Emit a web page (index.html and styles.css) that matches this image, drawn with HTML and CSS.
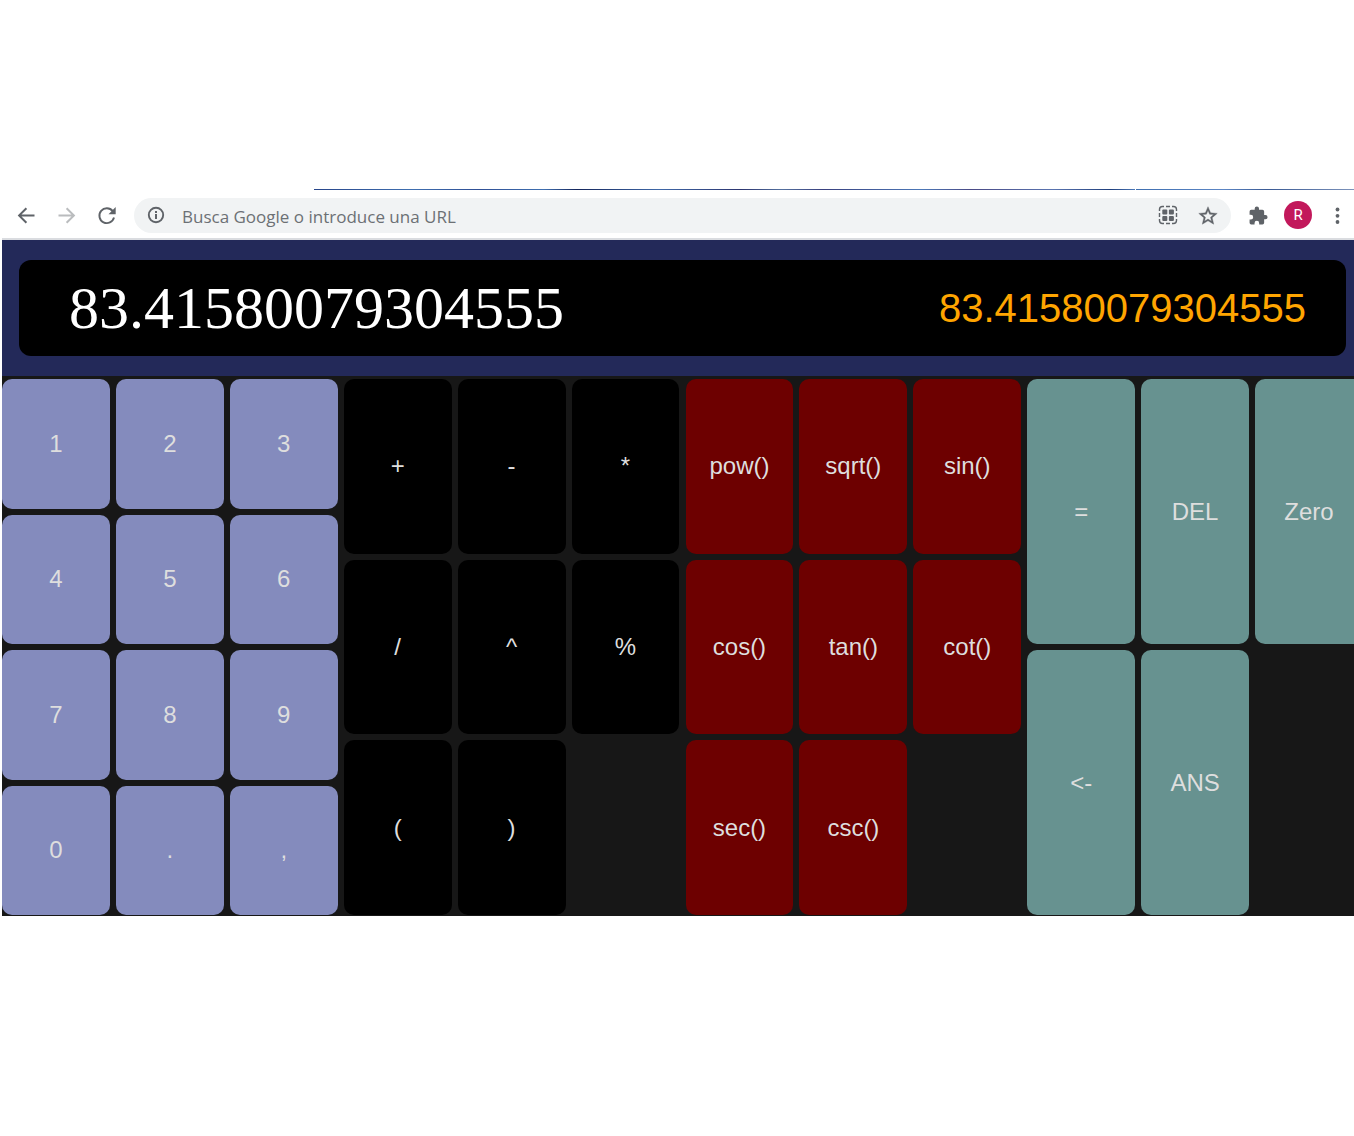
FILE: index.html
```html
<!DOCTYPE html>
<html lang="es">
<head>
<meta charset="utf-8">
<meta name="viewport" content="width=device-width, initial-scale=1">
<title>Calculadora</title>
<link rel="stylesheet" href="styles.css">
</head>
<body>
<div class="browser">
  <div class="tab-strip"><span class="tab-line"></span><span class="tab-line tab-line-end"></span></div>
  <nav class="toolbar" aria-label="Navegador">
    <button class="tool" type="button" aria-label="Atrás">
      <svg viewBox="0 0 24 24"><path d="M20.500 11.500H7.500l5.600-5.600L11.700 4.500l-8 8 8 8 1.400-1.400-5.600-5.600h13z"/></svg>
    </button>
    <button class="tool tool-off" type="button" aria-label="Adelante">
      <svg viewBox="0 0 24 24"><path d="M4.500 11.500h13l-5.600-5.600 1.400-1.400 8 8-8 8-1.400-1.400 5.600-5.600h-13z"/></svg>
    </button>
    <button class="tool" type="button" aria-label="Recargar">
      <svg viewBox="0 0 24 24"><path d="M20 14.500a7.400 7.400 0 1 1-1.300-6.300" fill="none" stroke="#5f6368" stroke-width="1.900"/><path d="M21.700 4v7.200h-7.200z"/></svg>
    </button>
    <div class="omnibox">
      <svg class="info" viewBox="0 0 20 20"><path d="M9 9h2v5H9zM9 6h2v2H9z"/><circle cx="10" cy="10" r="7.200" fill="none" stroke="#5f6368" stroke-width="1.900"/></svg>
      <input class="url" type="text" aria-label="Dirección" placeholder="Busca Google o introduce una URL">
      <button class="tool" type="button" aria-label="Crear código QR">
        <svg viewBox="0 0 24 24"><path d="M3.500 8V6.500a3 3 0 0 1 3-3H8M10 3.500h4M16 3.500h1.500a3 3 0 0 1 3 3V8M20.500 10v4M20.500 16v1.500a3 3 0 0 1-3 3H16M14 20.500h-4M8 20.500H6.500a3 3 0 0 1-3-3V16M3.500 14v-4" fill="none" stroke="#5f6368" stroke-width="1.400"/><rect x="6.300" y="6.500" width="5" height="5" rx="1"/><rect x="12.900" y="6.500" width="5" height="5" rx="1"/><rect x="6.300" y="12.900" width="5" height="5" rx="1"/><rect x="12.900" y="12.900" width="5" height="5" rx="1"/></svg>
      </button>
      <button class="tool" type="button" aria-label="Añadir a marcadores">
        <svg viewBox="-1 -2 26 26"><path d="M22 9.240l-7.190-.62L12 2 9.190 8.630 2 9.240l5.460 4.730L5.820 21 12 17.270 18.180 21l-1.630-7.030zM12 15.400l-3.760 2.270 1-4.280-3.320-2.880 4.380-.38L12 6.100l1.710 4.040 4.380.38-3.320 2.880 1 4.280z" stroke="#5f6368" stroke-width=".4"/></svg>
      </button>
    </div>
    <div class="menu-tools">
      <button class="tool" type="button" aria-label="Extensiones">
        <svg viewBox="-1 -3 28 28"><path d="M20.500 11H19V7a2 2 0 0 0-2-2h-4V3.500a2.500 2.500 0 0 0-5 0V5H4a2 2 0 0 0-2 2v3.800h1.500a2.700 2.700 0 0 1 0 5.400H2V20a2 2 0 0 0 2 2h3.800v-1.500a2.700 2.700 0 0 1 5.400 0V22H17a2 2 0 0 0 2-2v-4h1.500a2.500 2.500 0 0 0 0-5z"/></svg>
      </button>
      <button class="avatar" type="button" aria-label="Perfil R">R</button>
      <button class="tool" type="button" aria-label="Menú">
        <svg viewBox="0 0 24 24"><circle cx="12.500" cy="6.500" r="1.900"/><circle cx="12.500" cy="12.800" r="1.900"/><circle cx="12.500" cy="19" r="1.900"/></svg>
      </button>
    </div>
  </nav>
  <div class="viewport">
    <main class="calculator">
      <header class="header">
        <div class="display">
          <input class="expression" type="text" aria-label="Expresión" value="83.41580079304555">
          <output class="result">83.41580079304555</output>
        </div>
      </header>
      <div class="keypad">
        <div class="group numbers">
          <button type="button">1</button><button type="button">2</button><button type="button">3</button>
          <button type="button">4</button><button type="button">5</button><button type="button">6</button>
          <button type="button">7</button><button type="button">8</button><button type="button">9</button>
          <button type="button">0</button><button type="button">.</button><button type="button">,</button>
        </div>
        <div class="group operators">
          <button type="button">+</button><button type="button">-</button><button type="button">*</button>
          <button type="button">/</button><button type="button">^</button><button type="button">%</button>
          <button type="button">(</button><button type="button">)</button>
        </div>
        <div class="group functions">
          <button type="button">pow()</button><button type="button">sqrt()</button><button type="button">sin()</button>
          <button type="button">cos()</button><button type="button">tan()</button><button type="button">cot()</button>
          <button type="button">sec()</button><button type="button">csc()</button>
        </div>
        <div class="group actions">
          <button type="button">=</button><button type="button">DEL</button><button type="button">Zero</button>
          <button type="button">&lt;-</button><button type="button">ANS</button>
        </div>
      </div>
    </main>
  </div>
</div>
</body>
</html>
```

FILE: styles.css
```css
* {
  box-sizing: border-box;
}

body {
  margin: 0;
  background: #fff;
  font-family: "Liberation Sans", Arial, sans-serif;
}

button,
input {
  margin: 0;
  padding: 0;
  border: 0;
  background: none;
  font: inherit;
}

.browser {
  padding: 189px 0 0 2px;
}

/* Browser chrome */
.tab-strip {
  display: flex;
  gap: 1px;
  height: 1px;
  padding-left: 312px;
}

.tab-line {
  flex: 1;
  background: linear-gradient(90deg, #27458a, #3f6fb0 12%, #2f4f95 20%, #3f6fb0 28%, #14265c 32%, #3f68a8 42%, #2c3570 52%, #54719f 57%, #39407f 62%, #4c78b8 74%, #4a4a86 80%, #5a74b0 90%, #1f3f7c 97%, #4c78b8);
}

.tab-line-end {
  flex: 0 0 218px;
  background: linear-gradient(90deg, #3f6fb0, #5c86c5 40%, #3a5a94 60%, #7d93bb);
}

.toolbar {
  display: flex;
  align-items: center;
  gap: 16px;
  height: 50px;
  padding: 2px 5px 0 12px;
  border-bottom: 2px solid #dadce0;
}

.tool {
  flex: none;
  width: 24px;
  height: 24px;
}

.tool svg,
.info {
  display: block;
  width: 24px;
  height: 24px;
  fill: #5f6368;
}

.tool-off svg {
  fill: #babcbe;
}

.omnibox {
  display: flex;
  flex: 1;
  align-items: center;
  gap: 16px;
  height: 35px;
  padding: 0 11px 0 12px;
  border-radius: 18px;
  background: #f1f3f4;
}

.info {
  flex: none;
  width: 20px;
  height: 20px;
}

.url {
  flex: 1;
  min-width: 0;
  height: 26px;
  padding-top: 2px;
  font: 17px/24px "Open Sans", "Noto Sans", sans-serif;
}

.url::placeholder {
  color: #6c7074;
  opacity: 1;
}

.menu-tools {
  display: flex;
  align-items: center;
  gap: 13px;
}

.avatar {
  flex: none;
  width: 28px;
  height: 28px;
  border-radius: 50%;
  background: #c2185b;
  color: #fff;
  font: 15px/28px Roboto, sans-serif;
}

/* Calculator */
.viewport {
  overflow: hidden;
}

.calculator {
  width: calc(100% + 9px);
  background: #171717;
}

.header {
  padding: 20px 17px;
  background: #232959;
}

.display {
  display: flex;
  align-items: center;
  justify-content: space-between;
  min-height: 96px;
  padding: 0 40px 0 50px;
  border-radius: 12px;
  background: #000;
}

.expression {
  flex: 1;
  min-width: 0;
  color: #fff;
  font: 60px/68px "Liberation Serif", "Times New Roman", serif;
}

.result {
  color: #ffa500;
  font-size: 40px;
  line-height: 48px;
}

.keypad {
  display: grid;
  grid-template-columns: repeat(4, 1fr);
  gap: 6px;
  min-height: 540px;
  padding: 3px 0 1px;
}

.group {
  display: grid;
  grid-template-columns: repeat(3, 1fr);
  grid-auto-rows: 1fr;
  gap: 6px;
}

.group button {
  border-radius: 10px;
  color: #dedede;
  font-size: 24px;
  line-height: 28px;
}

.numbers button {
  background: #848bbd;
}

.operators button {
  background: #000;
}

.functions button {
  background: #6d0000;
}

.actions button {
  background: #679290;
}
```
